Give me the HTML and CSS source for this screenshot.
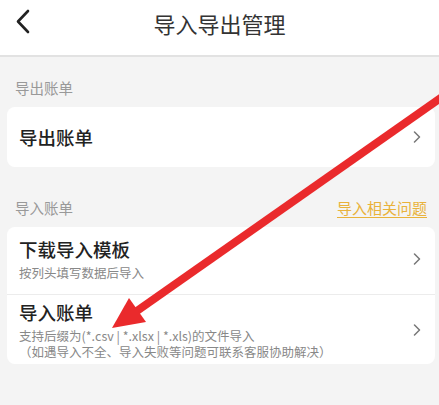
FILE: index.html
```html
<!DOCTYPE html>
<html lang="zh-CN">

<head>
    <meta charset="UTF-8">
    <meta name="viewport" content="width=device-width, initial-scale=1.0">
    <title>导入导出管理</title>
    <link rel="stylesheet" href="styles.css">
</head>

<body>
    <div class="page">
        <!-- 顶部导航 -->
        <div class="nav-bar">
            <a href="#" class="nav-back">
                <svg width="16" height="26" viewBox="0 0 16 26">
                    <path d="M13 2 L3 12.5 L13 23" fill="none" stroke="#222" stroke-width="2.6" stroke-linecap="round" stroke-linejoin="round" />
                </svg>
            </a>
            <div class="nav-title">导入导出管理</div>
        </div>

        <!-- 导出 -->
        <div class="section section-first">
            <div class="section-head">
                <span class="section-label">导出账单</span>
            </div>
            <div class="card">
                <a href="#" class="row row-single">
                    <div class="row-body">
                        <div class="row-title">导出账单</div>
                    </div>
                    <svg class="row-arrow" width="8" height="12" viewBox="0 0 8 12">
                        <path d="M1.5 1 L6.5 6 L1.5 11" fill="none" stroke="#777" stroke-width="1.5" stroke-linecap="round" stroke-linejoin="round" />
                    </svg>
                </a>
            </div>
        </div>

        <!-- 导入 -->
        <div class="section">
            <div class="section-head">
                <span class="section-label">导入账单</span>
                <a href="#" class="section-link">导入相关问题</a>
            </div>
            <div class="card">
                <a href="#" class="row row-template">
                    <div class="row-body">
                        <div class="row-title">下载导入模板</div>
                        <div class="row-desc">按列头填写数据后导入</div>
                    </div>
                    <svg class="row-arrow" width="8" height="12" viewBox="0 0 8 12">
                        <path d="M1.5 1 L6.5 6 L1.5 11" fill="none" stroke="#777" stroke-width="1.5" stroke-linecap="round" stroke-linejoin="round" />
                    </svg>
                </a>
                <a href="#" class="row row-import">
                    <div class="row-body">
                        <div class="row-title">导入账单</div>
                        <div class="row-desc">支持后缀为(*.csv | *.xlsx | *.xls)的文件导入</div>
                        <div class="row-desc row-desc-next">（如遇导入不全、导入失败等问题可联系客服协助解决）</div>
                    </div>
                    <svg class="row-arrow" width="8" height="12" viewBox="0 0 8 12">
                        <path d="M1.5 1 L6.5 6 L1.5 11" fill="none" stroke="#777" stroke-width="1.5" stroke-linecap="round" stroke-linejoin="round" />
                    </svg>
                </a>
            </div>
        </div>

        <!-- 标注箭头 -->
        <svg class="mark-arrow" width="439" height="405" viewBox="0 0 439 405">
            <line x1="445" y1="95" x2="134" y2="313" stroke="#ea2a2c" stroke-width="8" />
            <polygon points="112,328 129,298 146,322" fill="#ea2a2c" />
        </svg>
    </div>
</body>

</html>
```

FILE: styles.css
```css
html,
body,
div {
    padding: 0;
    margin: 0;
}

body {
    background-color: #f4f4f4;
    font-family: "Noto Sans CJK SC", "Noto Sans", sans-serif;
    color: #222;
}

a {
    text-decoration: none;
    color: inherit;
}

.page {
    position: relative;
    width: 439px;
    height: 405px;
    overflow: hidden;
}

/* 顶部导航 */

.nav-bar {
    height: 55px;
    background-color: #fff;
    border-bottom: 2px solid #e2e2e2;
    display: flex;
    align-items: center;
    justify-content: center;
    position: relative;
}

.nav-back {
    position: absolute;
    left: 15px;
    top: 9px;
}

.nav-title {
    font-size: 22px;
    color: #333;
    margin-top: -10px;
}

/* 分组 */

.section {
    margin-top: 20px;
}

.section-first {
    margin-top: 10px;
}

.section-head {
    height: 40px;
    display: flex;
    align-items: center;
    justify-content: space-between;
    padding: 0 12px 0 15px;
}

.section-label {
    font-size: 14.5px;
    color: #999;
}

.section-link {
    font-size: 15px;
    color: #e9b23a;
    text-decoration: underline;
    text-underline-offset: 3px;
}

.card {
    margin: 0 4px 0 7px;
    background-color: #fff;
    border-radius: 8px;
}

.row {
    display: flex;
    align-items: center;
    padding: 0 14px 0 12px;
}

.row + .row {
    border-top: 1px solid #ececec;
}

.row-body {
    flex: 1;
}

.row-single {
    height: 60px;
}

.row-template {
    padding-top: 10px;
    padding-bottom: 13px;
}

.row-import {
    padding-top: 5px;
    padding-bottom: 4px;
}

.row-title {
    font-size: 18.5px;
    line-height: 24px;
    font-weight: 500;
    color: #222;
}

.row-desc {
    font-size: 12.5px;
    line-height: 16px;
    color: #888;
    margin-top: 4px;
}

.row-desc-next {
    margin-top: 0;
}

.row-arrow {
    flex: none;
}

/* 标注箭头 */

.mark-arrow {
    position: absolute;
    left: 0;
    top: 0;
    pointer-events: none;
}
```
